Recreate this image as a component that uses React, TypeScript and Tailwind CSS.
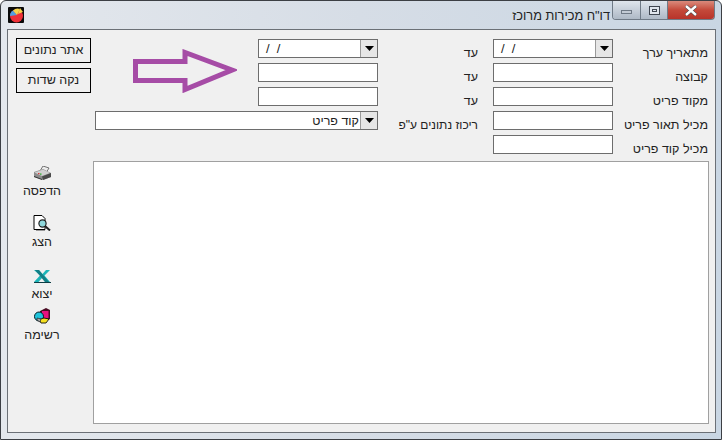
import React from 'react'

const font = "[font-family:'Liberation_Sans',sans-serif]"

function Caret() {
  return (
    <svg width="9" height="5" viewBox="0 0 9 5">
      <path d="M0 0h9L4.5 5z" fill="#000" />
    </svg>
  )
}

function Field() {
  return <div className="h-[19px] w-[120px] border border-[#6d6d6d] bg-white" />
}

function DateCombo() {
  return (
    <div className="flex h-[19px] w-[120px] border border-[#6d6d6d] bg-white">
      <div className="flex-1 whitespace-pre pl-[7px] text-[13px] leading-[17px] text-[#222]">/  /</div>
      <div className="flex w-[17px] items-center justify-center border-l border-[#9a9a9a] bg-[#e6e6e6]">
        <Caret />
      </div>
    </div>
  )
}

function Label({ text, pad = 0, small = false }: { text: string; pad?: number; small?: boolean }) {
  return (
    <div
      dir="rtl"
      className={`h-[19px] whitespace-nowrap pt-[6px] leading-[17px] text-[#222] ${small ? 'text-[12px]' : 'text-[12.5px]'}`}
      style={{ paddingRight: pad }}
    >
      {text}
    </div>
  )
}

function PrinterIcon() {
  return (
    <svg width="17" height="14" viewBox="0 0 17 14">
      <path d="M9 0l6 2-3 5-6-2z" fill="#ececec" stroke="#555" strokeWidth="0.800" />
      <path d="M0 6l9-3 8 4v4l-8 3-9-3z" fill="#8d8d8d" />
      <path d="M0.500 6.500l8.500-3 7 3.500-8 3z" fill="#cfcfcf" />
      <path d="M8 10.500l9-3.500v4l-8 3z" fill="#4a4a4a" />
      <path d="M0 10l8 3v1l-8-3z" fill="#333" />
      <rect x="4" y="7" width="1.500" height="1.200" fill="#d33" />
      <rect x="6" y="7.500" width="1.500" height="1.200" fill="#2a2" />
    </svg>
  )
}

function PreviewIcon() {
  return (
    <svg width="18" height="16" viewBox="0 0 18 16">
      <path d="M1 .5h8l3 3v11H1z" fill="#fff" stroke="#000" />
      <circle cx="9.500" cy="8.500" r="3.600" fill="#8fd8dc" stroke="#222" strokeWidth="1.200" />
      <path d="M12 11l5 4.500" stroke="#222" strokeWidth="2" />
      <path d="M3 15.500h9" stroke="#999" />
    </svg>
  )
}

function ExcelIcon() {
  return (
    <svg width="17" height="13" viewBox="0 0 17 13">
      <path d="M0 0h5l3.500 4L12 0h4l-5.500 5.500L16 12h-5L8 8l-3.500 4H0l6-6.500z" fill="#1cb5b8" />
      <path d="M1 0h4l10 12h-4z" fill="#0c5c64" opacity="0.600" />
      <path d="M0 12h17v1H0z" fill="#0d3d44" />
    </svg>
  )
}

function ListIcon() {
  return (
    <svg width="16" height="16" viewBox="0 0 16 16">
      <path d="M6 3l6-3 4 2v9l-4 2-6-2z" fill="#4a0c24" />
      <rect x="8" y="3" width="6.500" height="7" fill="#e8107e" />
      <circle cx="5" cy="8.500" r="4.500" fill="#1fc4dc" stroke="#0a1a20" strokeWidth="1" />
      <path d="M5 11.500l5-1.500 5 1-3 4H7z" fill="#f5e020" stroke="#111" strokeWidth="0.900" />
      <path d="M3 10l4 1-1 3-3-2z" fill="#aaa" stroke="#111" strokeWidth="0.600" />
    </svg>
  )
}

function AppIcon() {
  return (
    <svg width="16" height="16" viewBox="0 0 16 16">
      <rect width="16" height="16" rx="1" fill="#0a0a0a" />
      <circle cx="8.500" cy="9" r="6.500" fill="#ee3038" />
      <path d="M2 9a6.500 6.500 0 0 1 3-5.500L9 8z" fill="#4f9fe0" />
      <path d="M5 3.500A6.500 6.500 0 0 1 12 2l-3 6z" fill="#f6d34a" />
      <path d="M12 1l3 4-5 2z" fill="#f6d34a" />
    </svg>
  )
}

function SideAction({ icon, label, className }: { icon: React.ReactNode; label: string; className: string }) {
  return (
    <div className={`flex w-[52px] flex-col items-center ${className}`}>
      <div className="flex h-[16px] items-end justify-center">{icon}</div>
      <div dir="rtl" className="mt-[3px] whitespace-nowrap text-[12.5px] leading-[16px] text-[#222]">
        {label}
      </div>
    </div>
  )
}

export default function App() {
  return (
    <div className={`${font} flex h-[440px] w-[722px] flex-col overflow-hidden rounded-t-[6px] border border-[#3c3f44] bg-gradient-to-r from-[#e4e8ed] via-[#d6dde6] to-[#c9d6e3]`}>
      {/* title bar */}
      <div className="flex h-[28px] shrink-0">
        <div className="pl-[7px] pt-[6px]">
          <AppIcon />
        </div>
        <div className="flex flex-1 justify-end">
          <div dir="rtl" className="pr-[2px] pt-[6px] text-[12.75px] leading-[18px] text-[#222]">
            דו"ח מכירות מרוכז
          </div>
          <div className="mr-[6px] flex h-[19px] overflow-hidden rounded-b-[4px] border border-t-0 border-[#6f7a86]">
            <div className="flex w-[28px] items-center justify-center border-r border-[#6f7a86] bg-gradient-to-b from-[#dfe5ec] to-[#aeb9c6]">
              <div className="mt-[4px] h-[4px] w-[11px] border border-[#6f7a86] bg-[#c3cbd5]" />
            </div>
            <div className="flex w-[27px] items-center justify-center border-r border-[#6f7a86] bg-gradient-to-b from-[#dfe5ec] to-[#aeb9c6]">
              <div className="flex h-[9px] w-[11px] items-center justify-center border border-[#3f4650] bg-[#dfe5ec]">
                <div className="h-[3px] w-[5px] border border-[#3f4650]" />
              </div>
            </div>
            <div className="flex w-[46px] items-center justify-center bg-gradient-to-b from-[#d98a7c] via-[#c4493a] to-[#b8332a]">
              <svg width="14" height="11" viewBox="0 0 14 11">
                <path d="M2 1l10 9M12 1L2 10" stroke="#3c3f44" strokeWidth="3.600" />
                <path d="M2 1l10 9M12 1L2 10" stroke="#fff" strokeWidth="2.400" />
              </svg>
            </div>
          </div>
        </div>
      </div>

      {/* client area */}
      <div className="mb-[6px] ml-[6px] mr-[5px] flex flex-1 border border-[#6b7076] bg-[#f0f0f0]">
        <div className="w-[85px] shrink-0 pl-[8px] pt-[8px]">
          <button className="block h-[25px] w-[75px] border border-black text-[12.5px] text-[#222]" dir="rtl">
            אתר נתונים
          </button>
          <button className="mt-[5px] block h-[25px] w-[75px] border border-black text-[12.5px] text-[#222]" dir="rtl">
            נקה שדות
          </button>
          <SideAction className="mt-[71px]" icon={<PrinterIcon />} label="הדפסה" />
          <SideAction className="mt-[16px]" icon={<PreviewIcon />} label="הצג" />
          <SideAction className="mt-[17px]" icon={<ExcelIcon />} label="יצוא" />
          <SideAction className="mt-[6px]" icon={<ListIcon />} label="רשימה" />
        </div>

        <div className="flex w-[616px] flex-col">
          <div className="grid grid-cols-[165px_120px_115px_120px_96px] gap-y-[5px] pt-[9px]">
            <div className="row-span-3">
              <svg className="ml-[40px] mt-[10px]" width="104" height="44" viewBox="0 0 104 44">
                <path
                  d="M2.500 12.500H52V3.500L99 21 52 40.500V31.500H2.500z"
                  fill="none"
                  stroke="#a64ca6"
                  strokeWidth="5"
                  strokeLinejoin="miter"
                />
              </svg>
            </div>
            <DateCombo />
            <Label text="עד" pad={15} />
            <DateCombo />
            <Label text="מתאריך ערך" pad={1} />

            <Field />
            <Label text="עד" pad={15} />
            <Field />
            <Label text="קבוצה" pad={1} />

            <Field />
            <Label text="עד" pad={15} />
            <Field />
            <Label text="מקוד פריט" pad={1} />

            <div className="col-span-2 ml-[2px] flex h-[19px] border border-[#6d6d6d] bg-white">
              <div dir="rtl" className="flex-1 pr-[1px] pt-[1px] text-[12.5px] leading-[16px] text-[#222]">
                קוד פריט
              </div>
              <div className="flex w-[17px] items-center justify-center border-l border-[#9a9a9a] bg-[#e6e6e6]">
                <Caret />
              </div>
            </div>
            <Label text={'ריכוז נתונים ע"פ'} pad={15} small />
            <Field />
            <Label text="מכיל תאור פריט" pad={1} />

            <div className="col-span-3" />
            <Field />
            <Label text="מכיל קוד פריט" pad={1} />
          </div>

          <div className="mt-[7px] h-[263px] w-[616px] border border-[#a0a0a0] bg-white" />
        </div>
      </div>
    </div>
  )
}
